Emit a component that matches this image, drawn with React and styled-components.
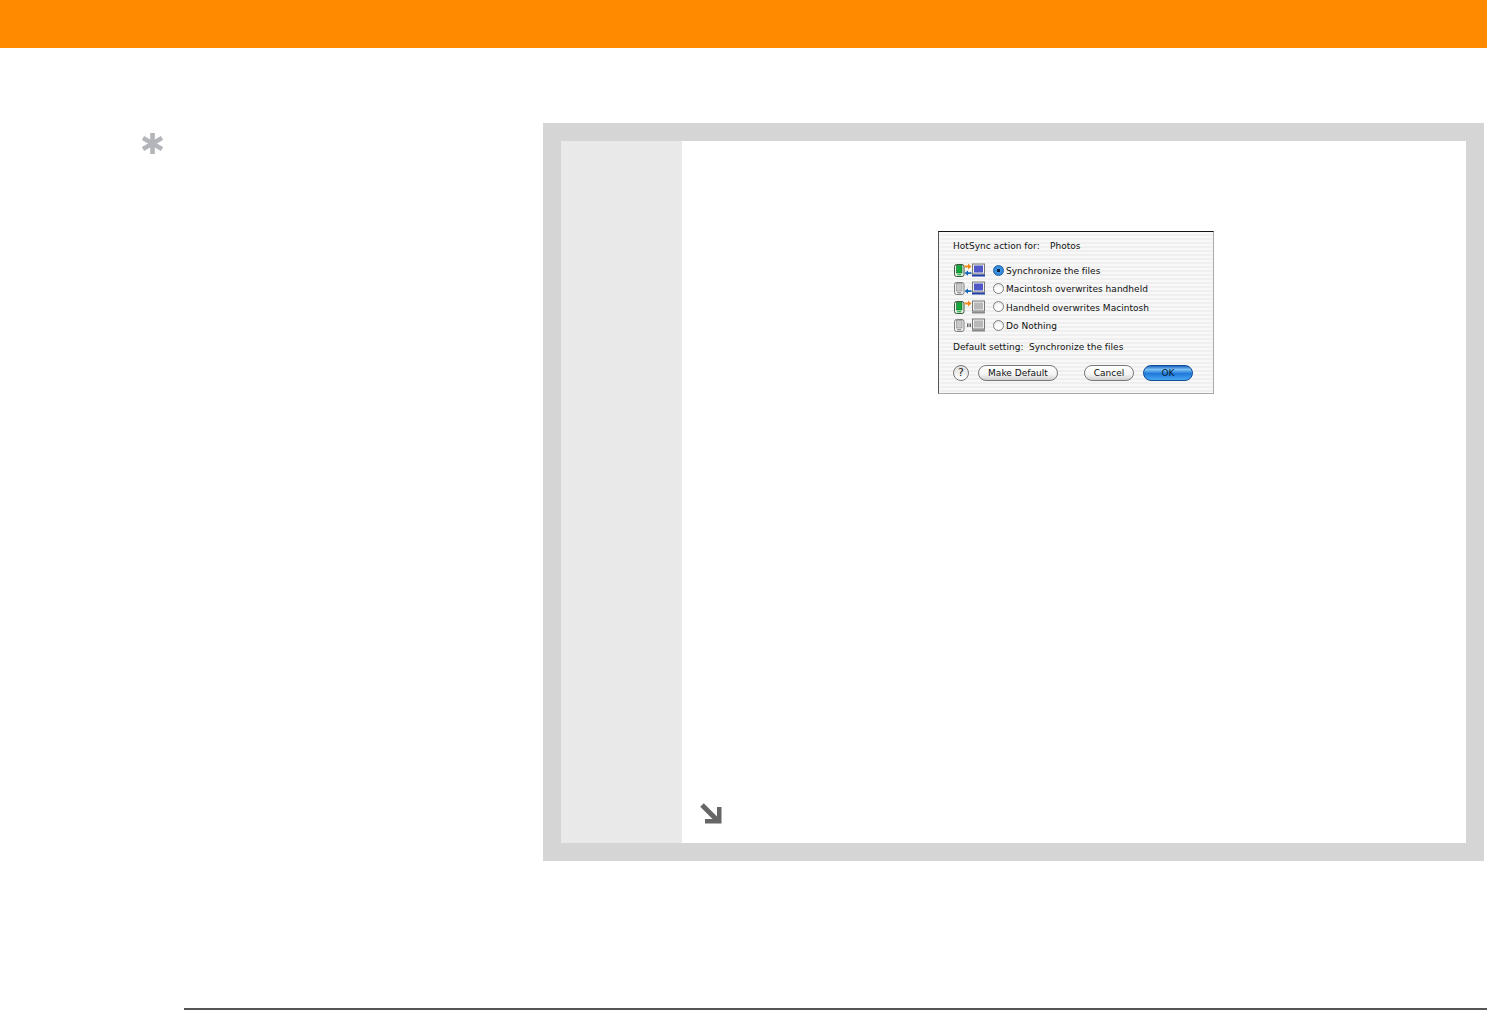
import React from "react";
import styled, {createGlobalStyle} from "styled-components";

const GlobalStyle = createGlobalStyle`
  html, body {
    margin: 0;
    padding: 0;
    background: #fff;
    overflow: hidden;
  }
`;

const Page = styled.div`
  width: 1487px;
  height: 1010px;
  display: flex;
  flex-direction: column;
`;

const TopBar = styled.div`
  height: 48px;
  background: #ff8a00;
`;

const Main = styled.div`
  display: flex;
  margin-top: 75px;
`;

const Sidebar = styled.div`
  width: 543px;
  box-sizing: border-box;
  padding: 10px 0 0 142px;
`;

const Panel = styled.div`
  width: 941px;
  height: 738px;
  box-sizing: border-box;
  border: 18px solid #d5d5d5;
  display: flex;
  background: #fff;
`;

const StepColumn = styled.div`
  width: 121px;
  background: #e9e9e9;
`;

const Content = styled.div`
  flex: 1;
  display: flex;
  flex-direction: column;
  padding: 90px 0 0 0;
`;

const Dialog = styled.div`
  width: 276px;
  height: 163px;
  box-sizing: border-box;
  margin-left: 256px;
  padding: 0 20px 0 14px;
  border: 1px solid #a8a8a8;
  border-top-color: #111;
  border-left-color: #555;
  background: repeating-linear-gradient(to bottom, #f8f8f8 0, #f8f8f8 2px, #efefef 2px, #efefef 4px);
  font-family: "DejaVu Sans", sans-serif;
  font-size: 9px;
  letter-spacing: 0.03px;
  color: #111;
  display: flex;
  flex-direction: column;
`;

const LabelRow = styled.div`
  display: flex;
  height: 12px;
  line-height: 12px;
  margin-top: ${p => p.$top}px;
  white-space: nowrap;
`;

const LabelName = styled.span`
  width: ${p => p.$width}px;
`;

const Options = styled.div`
  display: flex;
  flex-direction: column;
  margin-top: 9px;
`;

const OptionRow = styled.div`
  display: flex;
  align-items: center;
  height: 18.3px;
  white-space: nowrap;
`;

const OptionLabel = styled.span`
  padding-top: 2px;
`;

const Radio = styled.span`
  width: 11px;
  height: 11px;
  box-sizing: border-box;
  margin: 0 2px 0 7px;
  border-radius: 50%;
  border: 1px solid ${p => (p.$on ? "#1c5fa8" : "#808080")};
  background: ${p => (p.$on
    ? "radial-gradient(circle, #10233f 0, #10233f 25%, #3f97e6 32%, #2a78cc 100%)"
    : "radial-gradient(circle at 50% 70%, #ffffff 40%, #d8d8d8 100%)")};
`;

const ButtonRow = styled.div`
  display: flex;
  align-items: center;
  margin-top: 12px;
`;

const HelpButton = styled.span`
  width: 16px;
  height: 16px;
  box-sizing: border-box;
  border-radius: 50%;
  border: 1px solid #777;
  background: linear-gradient(#dedede, #fff);
  font-size: 11px;
  line-height: 14px;
  text-align: center;
  color: #222;
`;

const PillButton = styled.span`
  height: 16px;
  width: ${p => p.$width}px;
  margin-left: ${p => p.$left}px;
  box-sizing: border-box;
  border-radius: 8px;
  border: 1px solid ${p => (p.$primary ? "#0d4a94" : "#777")};
  background: ${p => (p.$primary
    ? "linear-gradient(#1f68c0 0, #7cc0f5 25%, #1e78d8 55%, #4aa8f2 100%)"
    : "linear-gradient(#ffffff 0, #f4f4f4 60%, #cfcfcf 100%)")};
  color: ${p => (p.$primary ? "#061a36" : "#111")};
  line-height: 14px;
  text-align: center;
`;

const Spacer = styled.div`
  flex: 1;
`;

const ContinueArrow = styled.svg`
  display: block;
  margin: 0 0 18px 18px;
`;

const FooterRule = styled.div`
  height: 2px;
  margin: 147px 0 0 184px;
  background: #555;
`;

function Asterisk() {
  return (
    <svg width="21" height="21" viewBox="0 0 21 21" style={{display: "block"}}>
      <g stroke="#b3b5ba" strokeWidth="4.6">
        <line x1="10.5" y1="0" x2="10.5" y2="21"/>
        <line x1="1" y1="5" x2="20" y2="16"/>
        <line x1="20" y1="5" x2="1" y2="16"/>
      </g>
    </svg>
  );
}

// one little "handheld <-> desktop" picture, colours depend on the sync direction
function SyncIcon({handheld, desktop, toDesktop, toHandheld}) {
  return (
    <svg width="33" height="16" viewBox="0 0 33 16" style={{display: "block", flexShrink: 0}}>
      <rect x="1.5" y="2.5" width="9.5" height="12" rx="2" fill="#efefef" stroke={handheld ? "#3b5a3b" : "#808080"}/>
      <rect x="3.5" y="3.5" width="5.5" height="7.5" fill={handheld ? "#12a83a" : "#c8c8c8"} stroke={handheld ? "#0b6d25" : "#8a8a8a"} strokeWidth=".6"/>
      <rect x="4.2" y="12" width="4" height="1.4" fill={handheld ? "#2fbf52" : "#999"}/>
      <rect x="19.5" y="2" width="12" height="10" fill="#efefef" stroke="#777"/>
      <rect x="21" y="3.5" width="9" height="7" fill={desktop ? "#5058c8" : "#b8b8b8"}/>
      <rect x="19" y="12.5" width="13" height="2" fill={desktop ? "#1f3fa8" : "#888"}/>
      {toDesktop && <path d="M11.5 3.5H15V1.5l3.5 3-3.5 3V5.5h-3.5z" fill="#f08a1c"/>}
      {toHandheld && <path d="M18.5 10.2H15V8.4l-3.5 2.7 3.5 2.7V12h3.5z" fill="#1565b8"/>}
      {!toDesktop && !toHandheld && <path d="M14 6.5h1.5v3.5H14zM16.5 6.5H18v3.5h-1.5z" fill="#666"/>}
    </svg>
  );
}

const rows = [
  {label: "Synchronize the files", on: true, handheld: true, desktop: true, toDesktop: true, toHandheld: true},
  {label: "Macintosh overwrites handheld", desktop: true, toHandheld: true},
  {label: "Handheld overwrites Macintosh", handheld: true, toDesktop: true},
  {label: "Do Nothing"}
];

export default function App() {
  return (
    <Page>
      <GlobalStyle/>
      <TopBar/>
      <Main>
        <Sidebar>
          <Asterisk/>
        </Sidebar>
        <Panel>
          <StepColumn/>
          <Content>
            <Dialog>
              <LabelRow $top={8}>
                <LabelName $width={97}>HotSync action for:</LabelName>
                <span>Photos</span>
              </LabelRow>
              <Options>
                {rows.map(r => (
                  <OptionRow key={r.label}>
                    <SyncIcon handheld={r.handheld} desktop={r.desktop} toDesktop={r.toDesktop} toHandheld={r.toHandheld}/>
                    <Radio $on={r.on}/>
                    <OptionLabel>{r.label}</OptionLabel>
                  </OptionRow>
                ))}
              </Options>
              <LabelRow $top={7}>
                <LabelName $width={76}>Default setting:</LabelName>
                <span>Synchronize the files</span>
              </LabelRow>
              <ButtonRow>
                <HelpButton>?</HelpButton>
                <PillButton $width={80} $left={9}>Make Default</PillButton>
                <PillButton $width={50} $left={26}>Cancel</PillButton>
                <PillButton $width={50} $left={9} $primary>OK</PillButton>
              </ButtonRow>
            </Dialog>
            <Spacer/>
            <ContinueArrow width="23" height="22" viewBox="0 0 23 22">
              <path d="M2 2 L17 17" stroke="#666" strokeWidth="5" fill="none"/>
              <path d="M21.5 4 V20.5 H5 V16 H17 V4 Z" fill="#666"/>
            </ContinueArrow>
          </Content>
        </Panel>
      </Main>
      <FooterRule/>
    </Page>
  );
}
